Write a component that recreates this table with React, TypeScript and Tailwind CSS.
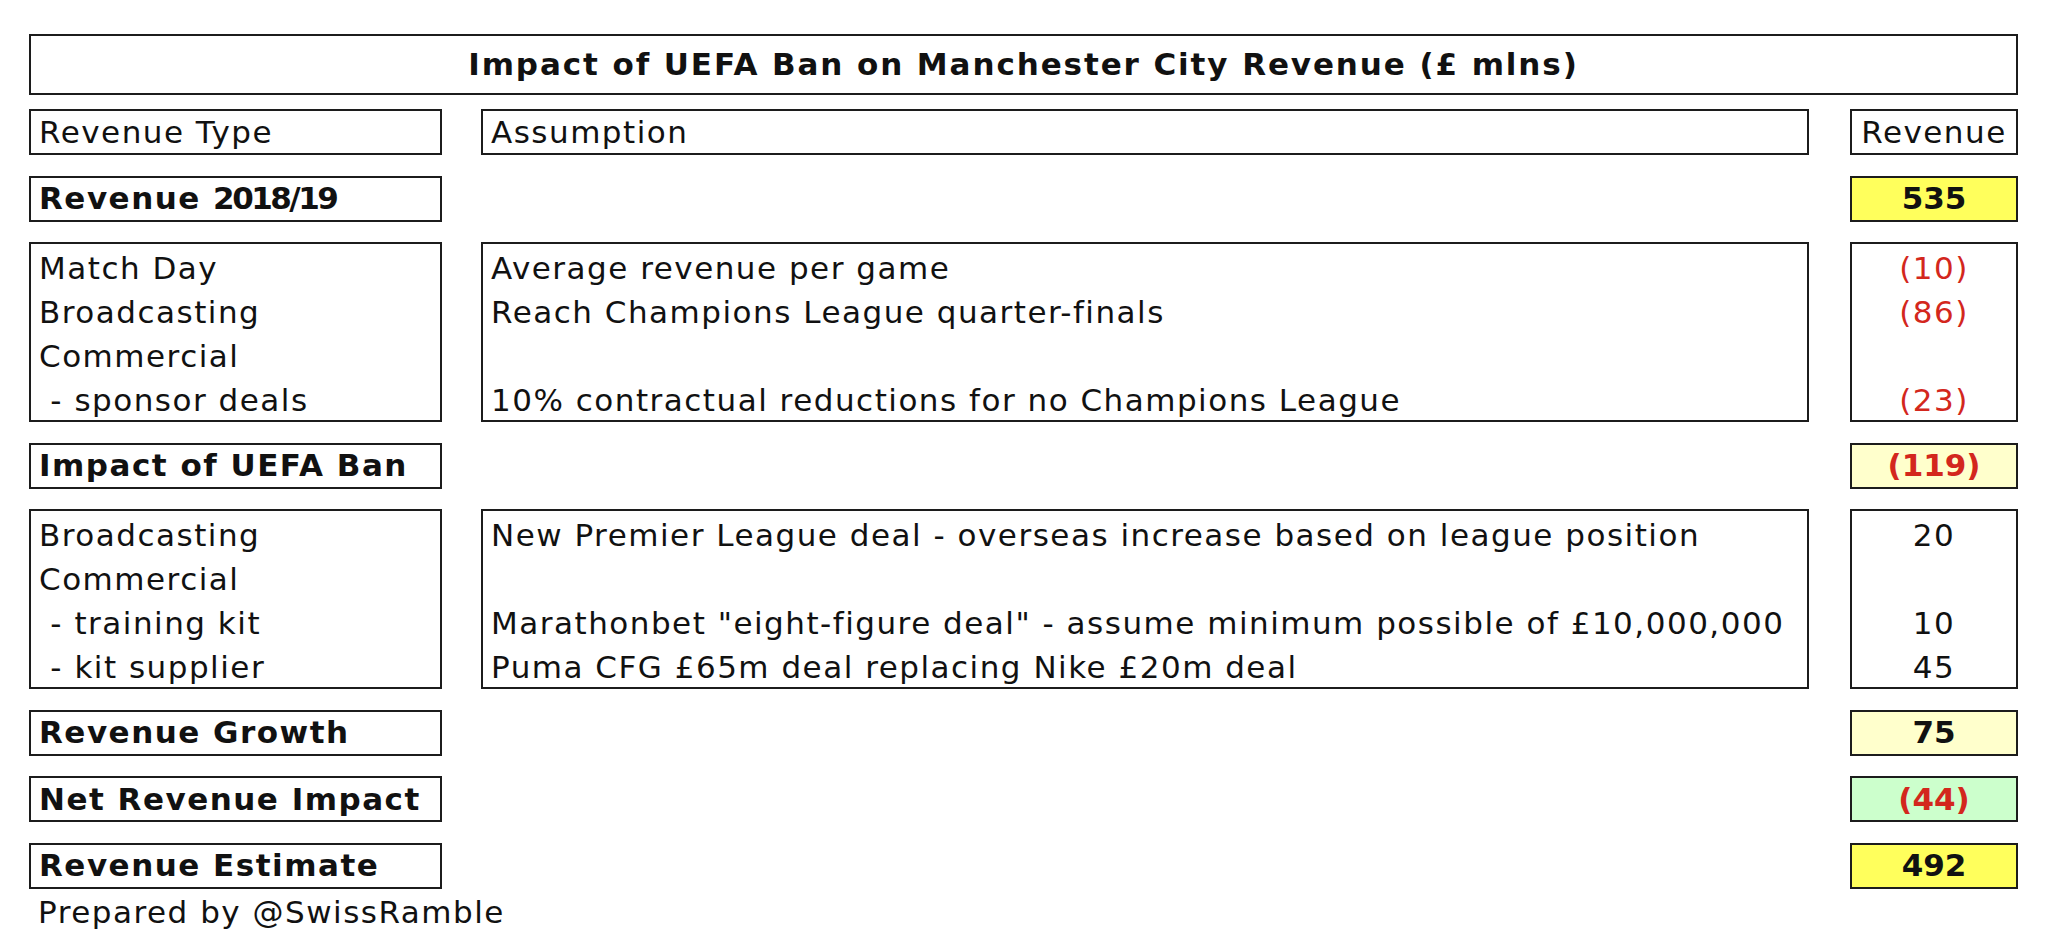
import React from 'react';

type Cell = { text: string; red?: boolean };

const RED = 'text-[#d3271d]';

function LineBox({ lines, width, center }: { lines: Cell[]; width: string; center?: boolean }) {
  return (
    <div className={`${width} h-[180px] border-2 border-[#1c1c1c] py-[2px] ${center ? 'text-center' : 'pl-[8px]'}`}>
      {lines.map((l, i) => (
        <div key={i} className={`h-[44px] leading-[44px] whitespace-pre ${l.red ? RED : ''}`}>
          {l.text}
        </div>
      ))}
    </div>
  );
}

function SumRow({ label, value, bg, red }: { label: React.ReactNode; value: string; bg: string; red?: boolean }) {
  return (
    <div className="flex font-bold">
      <div className="w-[413px] h-[46px] border-2 border-[#1c1c1c] pl-[8px] flex items-center whitespace-pre">{label}</div>
      <div className="w-[1328px] ml-[39px]" />
      <div className={`w-[168px] h-[46px] ml-[41px] border-2 border-[#1c1c1c] flex items-center justify-center tracking-[0px] ${bg} ${red ? RED : ''}`}>
        {value}
      </div>
    </div>
  );
}

export default function App() {
  return (
    <div className="min-h-screen bg-white text-[#111] font-['DejaVu_Sans',sans-serif] text-[31px] tracking-[1.5px] pt-[34px] pl-[29px]">
      <div className="w-[1989px] h-[61px] border-2 border-[#1c1c1c] flex items-center justify-center font-bold text-[31px] tracking-[1.9px]">
        Impact of UEFA Ban on Manchester City Revenue (£ mlns)
      </div>

      <div className="mt-[14px] flex flex-col gap-[20.5px]">
        <div className="flex">
          <div className="w-[413px] h-[46px] border-2 border-[#1c1c1c] pl-[8px] flex items-center">Revenue Type</div>
          <div className="w-[1328px] h-[46px] ml-[39px] border-2 border-[#1c1c1c] pl-[8px] flex items-center">Assumption</div>
          <div className="w-[168px] h-[46px] ml-[41px] border-2 border-[#1c1c1c] flex items-center justify-center">Revenue</div>
        </div>

        <SumRow
          label={
            <>
              Revenue <span className="tracking-[-2.5px]">2018/19</span>
            </>
          }
          value="535"
          bg="bg-[#ffff5c]"
        />

        <div className="flex">
          <LineBox
            width="w-[413px]"
            lines={[{ text: 'Match Day' }, { text: 'Broadcasting' }, { text: 'Commercial' }, { text: ' - sponsor deals' }]}
          />
          <div className="ml-[39px]">
            <LineBox
              width="w-[1328px]"
              lines={[
                { text: 'Average revenue per game' },
                { text: 'Reach Champions League quarter-finals' },
                { text: '' },
                { text: '10% contractual reductions for no Champions League' },
              ]}
            />
          </div>
          <div className="ml-[41px]">
            <LineBox
              width="w-[168px]"
              center
              lines={[{ text: '(10)', red: true }, { text: '(86)', red: true }, { text: '' }, { text: '(23)', red: true }]}
            />
          </div>
        </div>

        <SumRow label="Impact of UEFA Ban" value="(119)" bg="bg-[#ffffcc]" red />

        <div className="flex">
          <LineBox
            width="w-[413px]"
            lines={[{ text: 'Broadcasting' }, { text: 'Commercial' }, { text: ' - training kit' }, { text: ' - kit supplier' }]}
          />
          <div className="ml-[39px]">
            <LineBox
              width="w-[1328px]"
              lines={[
                { text: 'New Premier League deal - overseas increase based on league position' },
                { text: '' },
                { text: 'Marathonbet "eight-figure deal" - assume minimum possible of £10,000,000' },
                { text: 'Puma CFG £65m deal replacing Nike £20m deal' },
              ]}
            />
          </div>
          <div className="ml-[41px]">
            <LineBox width="w-[168px]" center lines={[{ text: '20' }, { text: '' }, { text: '10' }, { text: '45' }]} />
          </div>
        </div>

        <SumRow label="Revenue Growth" value="75" bg="bg-[#ffffcc]" />
        <SumRow label="Net Revenue Impact" value="(44)" bg="bg-[#ccffcc]" red />
        <SumRow label="Revenue Estimate" value="492" bg="bg-[#ffff5c]" />
      </div>

      <div className="pl-[9px] h-[46px] leading-[46px]">Prepared by @SwissRamble</div>
    </div>
  );
}
